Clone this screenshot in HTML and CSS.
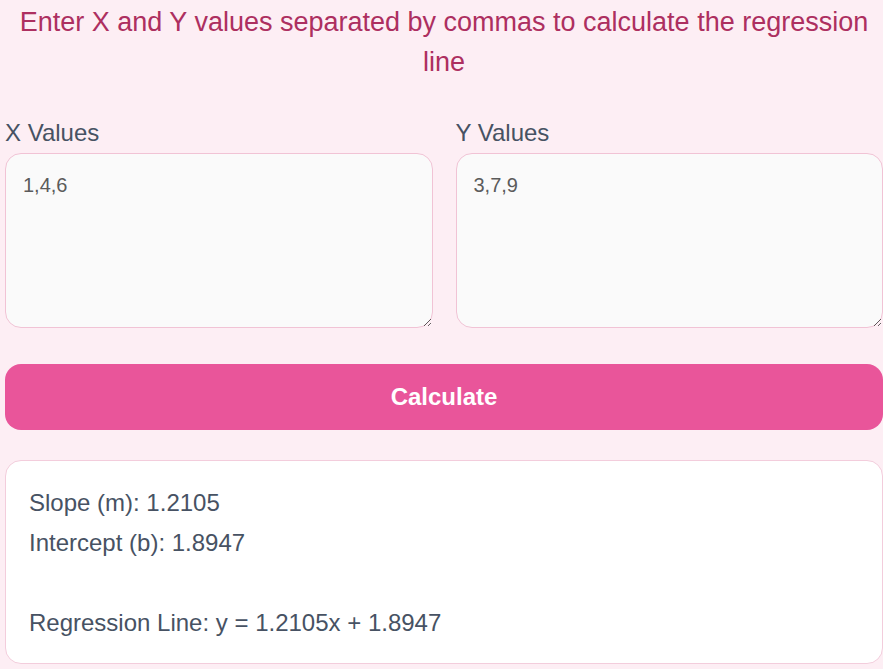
FILE: index.html
```html
<!DOCTYPE html>
<html lang="en">
<head>
<meta charset="utf-8">
<title>Linear Regression Calculator</title>
<link rel="stylesheet" href="styles.css">
</head>
<body>
<main class="calc">
  <h1 class="calc-intro">Enter X and Y values separated by commas to calculate the regression line</h1>
  <div class="inputs">
    <div class="field">
      <label class="field-label" for="xs">X Values</label>
      <textarea id="xs" class="field-input">1,4,6</textarea>
    </div>
    <div class="field">
      <label class="field-label" for="ys">Y Values</label>
      <textarea id="ys" class="field-input">3,7,9</textarea>
    </div>
  </div>
  <button class="calc-btn" type="button">Calculate</button>
  <section class="result">
    <p class="result-line">Slope (m): 1.2105</p>
    <p class="result-line">Intercept (b): 1.8947</p>
    <p class="result-line result-eq">Regression Line: y = 1.2105x + 1.8947</p>
  </section>
</main>
</body>
</html>
```
FILE: styles.css
```css
html, body {
  margin: 0;
  background: #fdeef4;
}

body {
  font-family: "Liberation Sans", Arial, sans-serif;
  color: #475263;
}

.calc {
  width: 878px;
  padding-left: 5px;
  box-sizing: content-box;
}

.calc-intro {
  margin: 2px 0 0;
  font-size: 27px;
  font-weight: 400;
  line-height: 40px;
  text-align: center;
  color: #ad2f60;
}

.inputs {
  display: grid;
  grid-template-columns: 1fr 1fr;
  column-gap: 23px;
  margin-top: 34px;
}

.field {
  display: flex;
  flex-direction: column;
}

.field-label {
  font-size: 24px;
  line-height: 33px;
  margin-bottom: 4px;
  color: #475263;
}

.field-input {
  box-sizing: border-box;
  height: 175px;
  padding: 16px 17px;
  border: 1px solid #f1c3d5;
  border-radius: 16px;
  background: #fafafa;
  font-family: "Liberation Sans", Arial, sans-serif;
  font-size: 20px;
  line-height: 30px;
  color: #5b5b5b;
  resize: vertical;
}

.calc-btn {
  display: block;
  width: 100%;
  height: 66px;
  margin-top: 36px;
  border: none;
  border-radius: 16px;
  background: #e9559a;
  color: #ffffff;
  font-family: "Liberation Sans", Arial, sans-serif;
  font-size: 24px;
  font-weight: 700;
}

.result {
  margin-top: 30px;
  box-sizing: border-box;
  height: 204px;
  padding: 22px 23px;
  border: 1px solid #f3cddc;
  border-radius: 16px;
  background: #ffffff;
}

.result-line {
  margin: 0;
  font-size: 24px;
  line-height: 40px;
  color: #475263;
}

.result-eq {
  margin-top: 40px;
}
```
